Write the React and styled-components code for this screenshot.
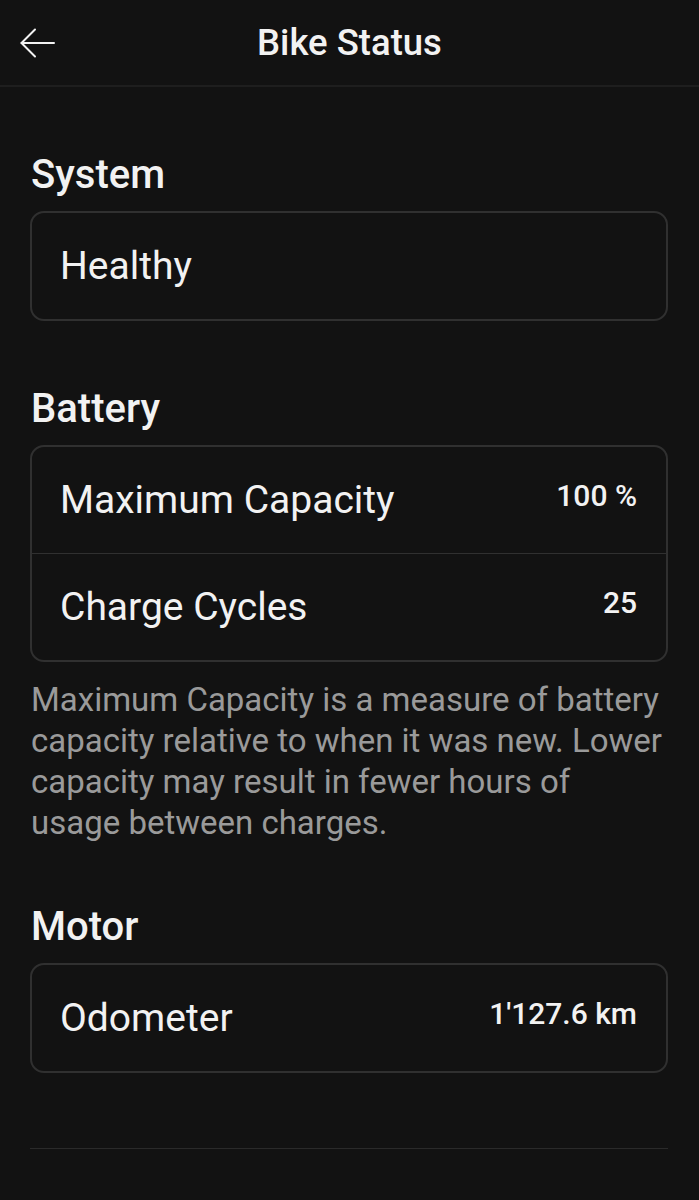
import React from 'react';
import styled, { createGlobalStyle } from 'styled-components';

const GlobalStyle = createGlobalStyle`
    html, body {
        margin: 0;
        padding: 0;
        background: #121212;
    }
    body {
        font-family: Roboto, "Liberation Sans", sans-serif;
        color: #f2f2f2;
        -webkit-font-smoothing: antialiased;
    }
`

const Screen = styled.div`
    min-height: 1200px;
    background: #121212;
`

const Header = styled.header`
    display: grid;
    grid-template-columns: 1fr auto 1fr;
    align-items: center;
    height: 85px;
    padding: 0 19px;
    border-bottom: 2px solid #1e1e1e;
`

const BackButton = styled.button`
    justify-self: start;
    display: flex;
    align-items: center;
    padding: 0;
    border: 0;
    background: none;
    color: #f2f2f2;
    cursor: pointer;
`

const Title = styled.h1`
    margin: 0;
    font-size: 36.5px;
    font-weight: 500;
`

const Content = styled.main`
    padding: 0 31px 0 30px;
`

const Section = styled.section`
    margin-top: ${p => p.gap || 66}px;
`

const Heading = styled.h2`
    margin: 0 0 14px 1px;
    font-size: 40px;
    line-height: 44px;
    font-weight: 500;
`

const Card = styled.div`
    border: 2px solid #303030;
    border-radius: 14px;
    overflow: hidden;
`

const Row = styled.div`
    display: flex;
    align-items: center;
    justify-content: space-between;
    height: 106px;
    padding: 0 29px 0 28px;
    & + & {
        border-top: 1.5px solid #303030;
    }
`

const Label = styled.span`
    font-size: 39px;
    font-weight: 400;
`

const Value = styled.span`
    padding-bottom: 10px;
    font-size: 30px;
    font-weight: 500;
`

const Note = styled.p`
    margin: 17px 0 0 1px;
    padding-right: 4px;
    font-size: 33px;
    line-height: 41px;
    color: #9a9a9a;
`

const Divider = styled.hr`
    margin: 75px 0 0;
    border: 0;
    border-top: 1.5px solid #2a2a2a;
`

const BackArrow = () => (
    <svg width="36" height="30" viewBox="0 0 36 30" fill="none" stroke="currentColor" strokeWidth="2" strokeLinecap="round" strokeLinejoin="round">
        <path d="M35 15 H2.5" />
        <path d="M16 1.5 L2.5 15 L16 28.5" />
    </svg>
)

const battery = [
    { label: 'Maximum Capacity', value: '100 %' },
    { label: 'Charge Cycles', value: '25' }
]

export default function App() {
    return (
        <Screen>
            <GlobalStyle />
            <Header>
                <BackButton aria-label="Back"><BackArrow /></BackButton>
                <Title>Bike Status</Title>
                <span />
            </Header>

            <Content>
                <Section>
                    <Heading>System</Heading>
                    <Card>
                        <Row><Label>Healthy</Label></Row>
                    </Card>
                </Section>

                <Section>
                    <Heading>Battery</Heading>
                    <Card>
                        {battery.map(item => (
                            <Row key={item.label}>
                                <Label>{item.label}</Label>
                                <Value>{item.value}</Value>
                            </Row>
                        ))}
                    </Card>
                    <Note>
                        Maximum Capacity is a measure of battery capacity relative to when it was new. Lower capacity may result in fewer hours of usage between charges.
                    </Note>
                </Section>

                <Section gap={62}>
                    <Heading>Motor</Heading>
                    <Card>
                        <Row>
                            <Label>Odometer</Label>
                            <Value>1'127.6 km</Value>
                        </Row>
                    </Card>
                </Section>

                <Divider />
            </Content>
        </Screen>
    )
}
